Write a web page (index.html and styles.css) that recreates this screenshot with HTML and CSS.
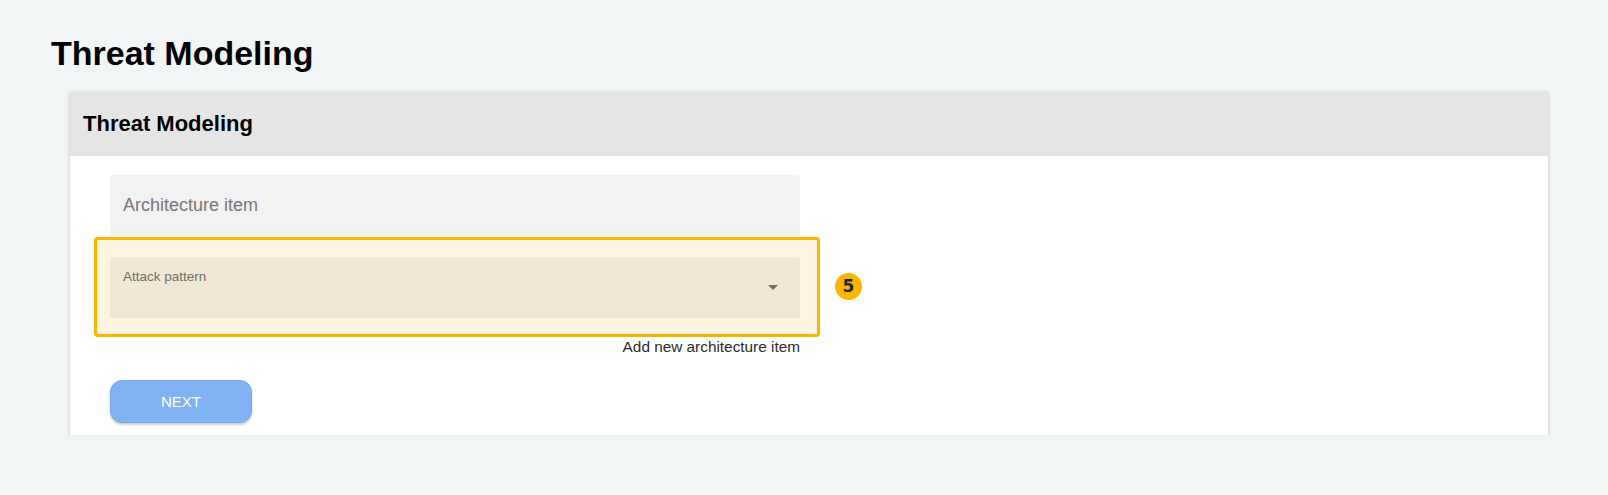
FILE: index.html
```html
<!DOCTYPE html>
<html lang="en">
<head>
<meta charset="utf-8">
<title>Threat Modeling</title>
<link rel="stylesheet" href="styles.css">
</head>
<body>
<div class="page">
  <h1 class="page-title">Threat Modeling</h1>
  <section class="card">
    <header class="card-header">
      <h2 class="card-title">Threat Modeling</h2>
    </header>
    <div class="card-body">
      <div class="field field-plain">
        <span class="placeholder">Architecture item</span>
      </div>
      <div class="field-wrap">
        <div class="highlight"></div>
        <div class="field field-select">
          <span class="label">Attack pattern</span>
          <span class="arrow"></span>
        </div>
        <div class="badge">5</div>
      </div>
      <div class="add-row">Add new architecture item</div>
      <button class="btn-next" type="button">NEXT</button>
    </div>
  </section>
</div>
</body>
</html>
```
FILE: styles.css
```css
html, body {
  margin: 0;
  padding: 0;
}
body {
  background: #f2f5f6;
  font-family: "Liberation Sans", Arial, sans-serif;
  color: #000;
}
.page {
  padding: 33px 60px 0 51px;
}
.page-title {
  margin: 0;
  font-size: 34px;
  line-height: 40px;
  font-weight: 700;
}
.card {
  margin: 18px 0 0 19px;
  background: #fff;
  box-shadow: 0 2px 4px rgba(0, 0, 0, 0.2);
}
.card-header {
  height: 65px;
  background: #e5e5e5;
  display: flex;
  align-items: center;
  padding-left: 13px;
}
.card-title {
  margin: 0;
  font-size: 22px;
  font-weight: 700;
  line-height: 26px;
}
.card-body {
  padding: 19px 40px 12px;
  width: 690px;
}
.field {
  height: 61px;
  border-radius: 4px 4px 0 0;
  box-sizing: border-box;
  position: relative;
}
.field-plain {
  background: #f2f2f2;
  display: flex;
  align-items: center;
  padding-left: 13px;
}
.placeholder {
  font-size: 18px;
  color: #777;
}
.field-wrap {
  position: relative;
  margin-top: 21px;
}
.highlight {
  position: absolute;
  left: -16px;
  top: -20px;
  right: -20px;
  bottom: -19px;
  border: 3px solid #ffb400;
  border-radius: 4px;
  background: #fef5e0;
}
.field-select {
  background: #f0e7d4;
  z-index: 1;
}
.label {
  position: absolute;
  left: 13px;
  top: 12px;
  font-size: 13.5px;
  line-height: 16px;
  color: #736d62;
}
.arrow {
  position: absolute;
  right: 22px;
  top: 28px;
  width: 0;
  height: 0;
  border-left: 5px solid transparent;
  border-right: 5px solid transparent;
  border-top: 5px solid #736d62;
}
.badge {
  position: absolute;
  left: 725px;
  top: 16px;
  width: 27px;
  height: 27px;
  border-radius: 50%;
  background: #ffb400;
  color: #1a2838;
  font-family: "DejaVu Sans", sans-serif;
  font-weight: 700;
  font-size: 17px;
  line-height: 27px;
  text-align: center;
}
.add-row {
  margin-top: 20px;
  text-align: right;
  font-size: 15.35px;
  line-height: 17px;
  color: #2b2b2b;
}
.btn-next {
  display: block;
  margin-top: 25px;
  width: 142px;
  height: 43px;
  border: 1px solid #78a8ea;
  border-radius: 12px;
  background: #80b2f4;
  color: #fff;
  font-family: "Liberation Sans", Arial, sans-serif;
  font-size: 15px;
  box-shadow: 0 2px 2px rgba(0, 0, 0, 0.18);
  padding: 0;
  cursor: pointer;
}
```
